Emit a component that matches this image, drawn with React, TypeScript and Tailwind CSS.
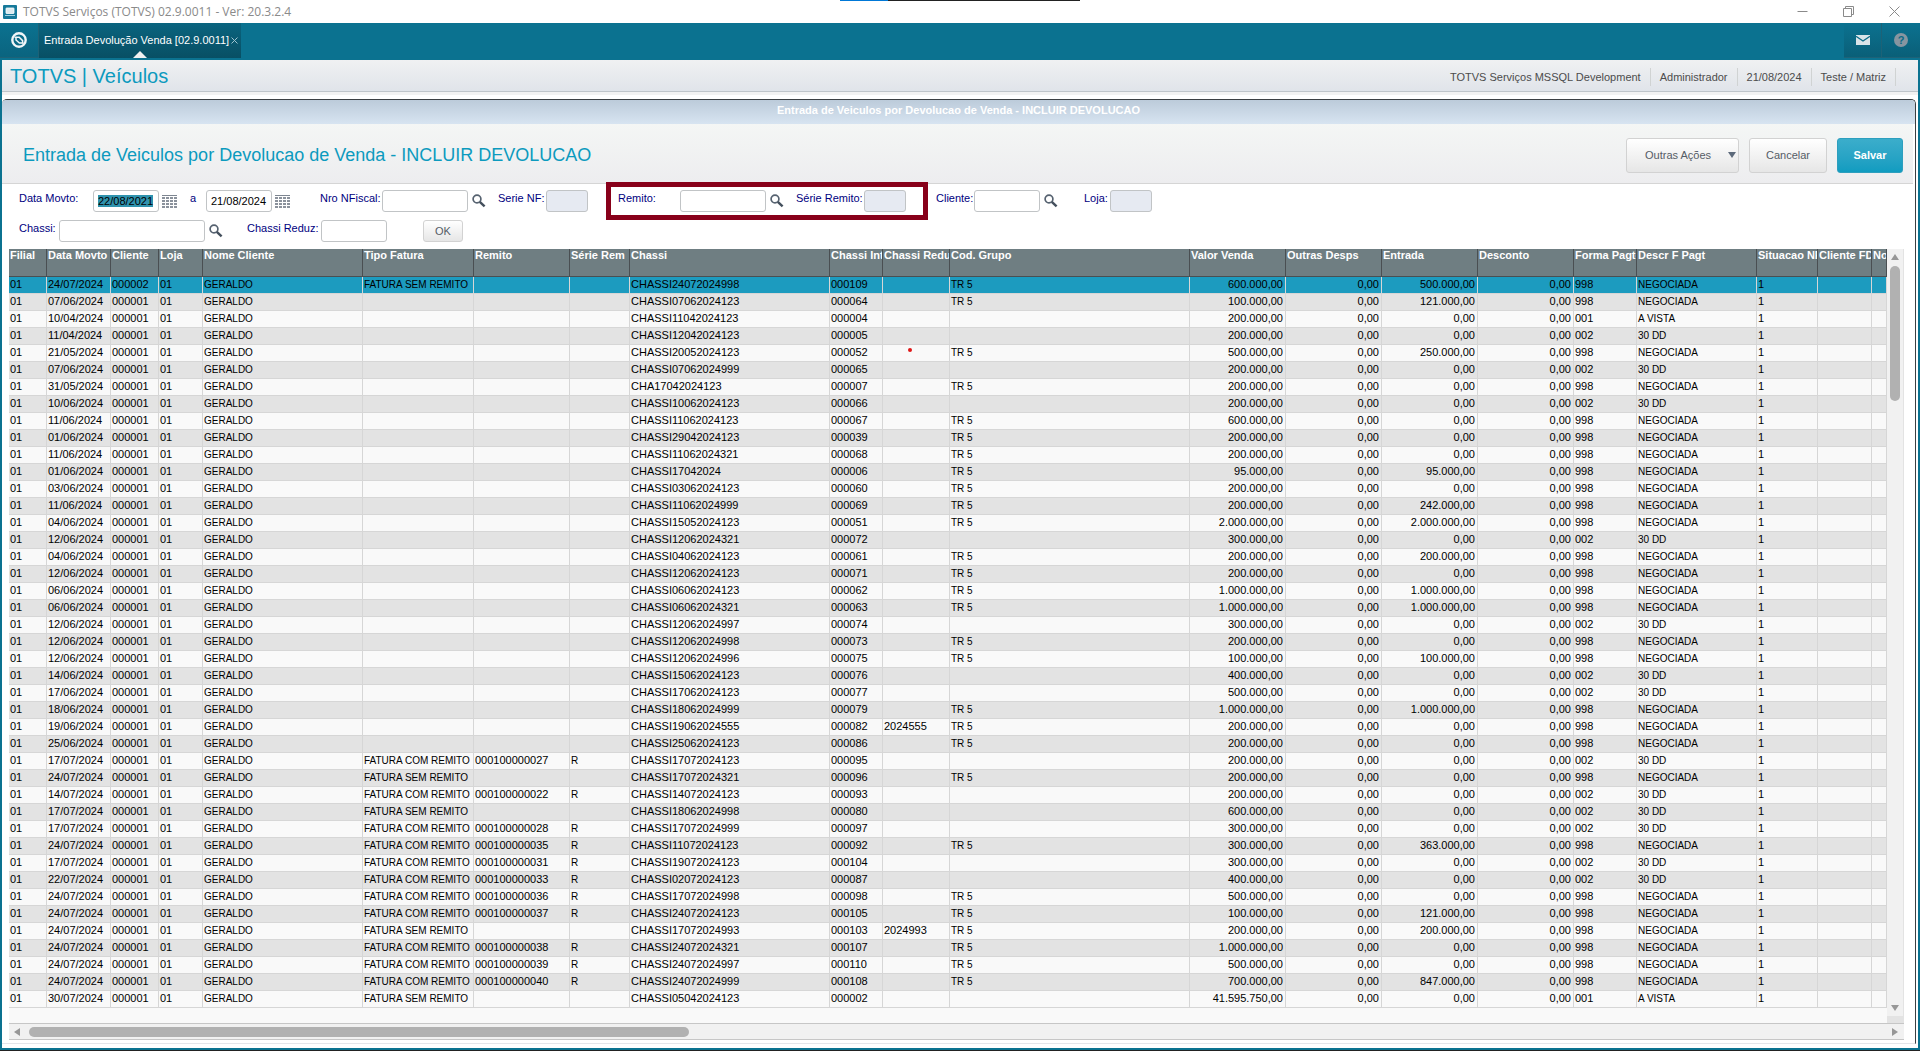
import type { ReactNode } from "react";

type Column = { title: string; width: number; small?: boolean; right?: boolean };

const columns: Column[] = [
  { title: "Filial", width: 38 },
  { title: "Data Movto", width: 64 },
  { title: "Cliente", width: 48 },
  { title: "Loja", width: 44 },
  { title: "Nome Cliente", width: 160, small: true },
  { title: "Tipo Fatura", width: 111, small: true },
  { title: "Remito", width: 96 },
  { title: "Série Rem", width: 60, small: true },
  { title: "Chassi", width: 200 },
  { title: "Chassi Int", width: 53 },
  { title: "Chassi Reduz", width: 67 },
  { title: "Cod. Grupo", width: 240, small: true },
  { title: "Valor Venda", width: 96, right: true },
  { title: "Outras Desps", width: 96, right: true },
  { title: "Entrada", width: 96, right: true },
  { title: "Desconto", width: 96, right: true },
  { title: "Forma Pagto", width: 63 },
  { title: "Descr F Pagt", width: 120, small: true },
  { title: "Situacao NF", width: 61 },
  { title: "Cliente FDI", width: 54 },
  { title: "No", width: 15 },
];

// data | remito | chassi | interno | reduzido | grupo | valor | entrada | pagto
// remito: "-" = none, "S" = fatura sem remito, number = fatura com remito
const source = `24/07/2024|S|CHASSI24072024998|000109||5|600.000,00|500.000,00|998
07/06/2024|-|CHASSI07062024123|000064||5|100.000,00|121.000,00|998
10/04/2024|-|CHASSI11042024123|000004|||200.000,00|0,00|001
11/04/2024|-|CHASSI12042024123|000005|||200.000,00|0,00|002
21/05/2024|-|CHASSI20052024123|000052||5|500.000,00|250.000,00|998
07/06/2024|-|CHASSI07062024999|000065|||200.000,00|0,00|002
31/05/2024|-|CHA17042024123|000007||5|200.000,00|0,00|998
10/06/2024|-|CHASSI10062024123|000066|||200.000,00|0,00|002
11/06/2024|-|CHASSI11062024123|000067||5|600.000,00|0,00|998
01/06/2024|-|CHASSI29042024123|000039||5|200.000,00|0,00|998
11/06/2024|-|CHASSI11062024321|000068||5|200.000,00|0,00|998
01/06/2024|-|CHASSI17042024|000006||5|95.000,00|95.000,00|998
03/06/2024|-|CHASSI03062024123|000060||5|200.000,00|0,00|998
11/06/2024|-|CHASSI11062024999|000069||5|200.000,00|242.000,00|998
04/06/2024|-|CHASSI15052024123|000051||5|2.000.000,00|2.000.000,00|998
12/06/2024|-|CHASSI12062024321|000072|||300.000,00|0,00|002
04/06/2024|-|CHASSI04062024123|000061||5|200.000,00|200.000,00|998
12/06/2024|-|CHASSI12062024123|000071||5|200.000,00|0,00|998
06/06/2024|-|CHASSI06062024123|000062||5|1.000.000,00|1.000.000,00|998
06/06/2024|-|CHASSI06062024321|000063||5|1.000.000,00|1.000.000,00|998
12/06/2024|-|CHASSI12062024997|000074|||300.000,00|0,00|002
12/06/2024|-|CHASSI12062024998|000073||5|200.000,00|0,00|998
12/06/2024|-|CHASSI12062024996|000075||5|100.000,00|100.000,00|998
14/06/2024|-|CHASSI15062024123|000076|||400.000,00|0,00|002
17/06/2024|-|CHASSI17062024123|000077|||500.000,00|0,00|002
18/06/2024|-|CHASSI18062024999|000079||5|1.000.000,00|1.000.000,00|998
19/06/2024|-|CHASSI19062024555|000082|2024555|5|200.000,00|0,00|998
25/06/2024|-|CHASSI25062024123|000086||5|200.000,00|0,00|998
17/07/2024|27|CHASSI17072024123|000095|||200.000,00|0,00|002
24/07/2024|S|CHASSI17072024321|000096||5|200.000,00|0,00|998
14/07/2024|22|CHASSI14072024123|000093|||200.000,00|0,00|002
17/07/2024|S|CHASSI18062024998|000080|||600.000,00|0,00|002
17/07/2024|28|CHASSI17072024999|000097|||300.000,00|0,00|002
24/07/2024|35|CHASSI11072024123|000092||5|300.000,00|363.000,00|998
17/07/2024|31|CHASSI19072024123|000104|||300.000,00|0,00|002
22/07/2024|33|CHASSI02072024123|000087|||400.000,00|0,00|002
24/07/2024|36|CHASSI17072024998|000098||5|500.000,00|0,00|998
24/07/2024|37|CHASSI24072024123|000105||5|100.000,00|121.000,00|998
24/07/2024|S|CHASSI17072024993|000103|2024993|5|200.000,00|200.000,00|998
24/07/2024|38|CHASSI24072024321|000107||5|1.000.000,00|0,00|998
24/07/2024|39|CHASSI24072024997|000110||5|500.000,00|0,00|998
24/07/2024|40|CHASSI24072024999|000108||5|700.000,00|847.000,00|998
30/07/2024|S|CHASSI05042024123|000002|||41.595.750,00|0,00|001`;

const payments: Record<string, string> = { "998": "NEGOCIADA", "001": "A VISTA", "002": "30 DD" };

const rows = source.split("\n").map((line, i) => {
  const [date, rem, chassi, interno, reduz, grupo, valor, entrada, pagto] = line.split("|");
  const hasRemito = rem !== "-" && rem !== "S";
  const tipo = rem === "-" ? "" : hasRemito ? "FATURA COM REMITO" : "FATURA SEM REMITO";
  return [
    "01", date, i === 0 ? "000002" : "000001", "01", "GERALDO", tipo,
    hasRemito ? "0001000000" + rem : "", hasRemito ? "R" : "", chassi, interno, reduz,
    grupo ? "TR 5" : "", valor, "0,00", entrada, "0,00", pagto, payments[pagto], "1", "", "",
  ];
});

const SearchButton = ({ label }: { label: string }) => (
  <button aria-label={label} className="ml-1 mt-1 h-4 w-4 shrink-0">
    <svg viewBox="0 0 16 16" className="h-4 w-4" fill="none">
      <circle cx="5" cy="5" r="3.9" stroke="#566270" strokeWidth="1.7" />
      <path d="M7.8 7.8L12.6 12.4" stroke="#434f5c" strokeWidth="2.4" />
    </svg>
  </button>
);

const CalendarButton = ({ label }: { label: string }) => (
  <button aria-label={label} className="ml-[3px] mt-[5px] h-[14px] w-4 shrink-0">
    <svg viewBox="0 0 16 14" className="h-[14px] w-4" shapeRendering="crispEdges">
      <path d="M0 0H15V1H0z" fill="#7d8590" />
      {[2, 5, 8, 11].map((y) =>
        [0, 4, 8, 12].map((x) => <rect key={x + "-" + y} x={x} y={y} width="3" height="2" fill="#8b929c" />)
      )}
    </svg>
  </button>
);

type FieldProps = {
  id: string;
  label: string;
  labelClass: string;
  inputClass: string;
  value?: string;
  disabled?: boolean;
  selected?: boolean;
};

const Field = ({ id, label, labelClass, inputClass, value = "", disabled, selected }: FieldProps) => (
  <>
    <label htmlFor={id} className={"shrink-0 whitespace-nowrap leading-4 text-[#000080] " + labelClass}>
      {label}
    </label>
    <input
      id={id}
      defaultValue={value}
      disabled={disabled}
      autoFocus={selected}
      onFocus={(e) => e.target.select()}
      ref={(el) => {
        if (el && selected) el.select();
      }}
      className={
        "h-[22px] shrink-0 rounded-[3px] border border-[#c1c4c6] px-1 text-[11px] text-black outline-none selection:bg-[#2f93ae] selection:text-black disabled:bg-[#e6eaf2] " +
        inputClass
      }
    />
  </>
);

const Arrow = ({ d }: { d: string }) => (
  <svg viewBox="0 0 8 8" className="h-2 w-2" fill="#979797">
    <path d={d} />
  </svg>
);

const InfoItem = ({ children }: { children: ReactNode }) => (
  <span className="border-r border-[#d0d3d3] px-[9px] leading-[18px]">{children}</span>
);

const actionButton =
  "h-[35px] rounded-[3px] border border-[#d2d2d2] bg-linear-to-b from-white to-[#e6e6e6] text-[#555c66]";

const TitleBar = () => (
  <header className="relative flex h-[23px] items-center justify-between bg-white pl-[3px] pr-5">
    <div className="absolute inset-x-0 top-0 flex justify-center">
      <span className="h-px w-12 bg-[#0078d7]" />
      <span className="h-px w-48 bg-[#222]" />
    </div>
    <div className="flex items-center gap-[6px] font-['Open_Sans',sans-serif] text-[12px] text-[#8a8a8a]">
      <svg viewBox="0 0 14 14" className="h-[14px] w-[14px]">
        <rect width="14" height="14" rx="1" fill="#15799a" />
        <rect x="3" y="3" width="8" height="5.5" rx="0.5" fill="#dcebf0" stroke="#fff" strokeWidth="0.8" />
        <path d="M2 10.5H12" stroke="#9fd0df" />
      </svg>
      <span>TOTVS Serviços (TOTVS) 02.9.0011 - Ver: 20.3.2.4</span>
    </div>
    <div className="flex items-center gap-[35px]">
      <button aria-label="Minimizar">
        <svg viewBox="0 0 11 11" className="h-[11px] w-[11px]" stroke="#8a8a8a">
          <path d="M0.5 5.5H10.5" />
        </svg>
      </button>
      <button aria-label="Restaurar">
        <svg viewBox="0 0 11 11" className="h-[11px] w-[11px]" fill="none" stroke="#8a8a8a">
          <path d="M0.5 2.5H8.5V10.5H0.5zM2.5 2.5V0.5H10.5V8.5H8.5" />
        </svg>
      </button>
      <button aria-label="Fechar">
        <svg viewBox="0 0 11 11" className="h-[11px] w-[11px]" stroke="#8a8a8a">
          <path d="M0.5 0.5L10.5 10.5M10.5 0.5L0.5 10.5" />
        </svg>
      </button>
    </div>
  </header>
);

const TabBar = () => (
  <nav className="flex h-[37px] items-start justify-between bg-[#0b7290]">
    <div className="flex">
      <button
        aria-label="Início"
        className="flex h-[35px] w-[39px] items-center justify-center border-b border-r border-[#1d6277] bg-linear-to-b from-[#0b7290] to-[#0a647f]"
      >
        <svg viewBox="0 0 18 18" className="h-[18px] w-[18px]" fill="none" stroke="#f1f6f8">
          <circle cx="9" cy="9" r="6.7" strokeWidth="2.4" />
          <path d="M4.5 6.2H9.2L12.6 9.6V12.6" strokeWidth="1.5" />
          <path d="M6 6.2V9L9.4 12H13.4" strokeWidth="1.5" />
        </svg>
      </button>
      <div className="relative flex h-[35px] items-center gap-[2px] bg-linear-to-b from-[#0a647f] to-[#084f64] pl-[5px] pr-[3px] text-white">
        <button className="whitespace-nowrap">Entrada Devolução Venda [02.9.0011]</button>
        <button aria-label="Fechar aba">
          <svg viewBox="0 0 7 7" className="h-[7px] w-[7px]" stroke="#9fc3cf">
            <path d="M0.5 0.5L6.5 6.5M6.5 0.5L0.5 6.5" />
          </svg>
        </button>
        <svg viewBox="0 0 14 7" className="absolute bottom-0 left-1/2 h-[7px] w-[14px] -translate-x-1/2" fill="#f0f1f2">
          <path d="M7 0L14 7H0z" />
        </svg>
      </div>
    </div>
    <div className="flex">
      <button
        aria-label="Mensagens"
        className="flex h-[35px] w-[38px] items-center justify-center border-b border-r border-[#1d6277] bg-linear-to-b from-[#0b7290] to-[#0a5f78]"
      >
        <svg viewBox="0 0 14 10" className="h-[10px] w-[14px]">
          <rect width="14" height="10" fill="#d9e3e8" />
          <path d="M0 1.2L7 6L14 1.2" fill="none" stroke="#0a6a86" strokeWidth="1.3" />
        </svg>
      </button>
      <button
        aria-label="Ajuda"
        className="flex h-[35px] w-[38px] items-center justify-center border-b border-[#1d6277] bg-linear-to-b from-[#0b7290] to-[#0a5f78]"
      >
        <span className="flex h-[14px] w-[14px] items-center justify-center rounded-full bg-[#8795a0] text-[11px] font-bold text-[#0a6a86]">
          ?
        </span>
      </button>
    </div>
  </nav>
);

const Filters = () => (
  <form className="pl-[17px] pt-[6px]" onSubmit={(e) => e.preventDefault()}>
    <div className="flex items-start">
      <Field
        id="dataDe"
        label="Data Movto:"
        labelClass="w-[74px]"
        inputClass="w-[66px]"
        value="22/08/2021"
        selected
      />
      <CalendarButton label="Calendário inicial" />
      <Field id="dataAte" label="a" labelClass="ml-3 w-[16px]" inputClass="w-[66px]" value="21/08/2024" />
      <CalendarButton label="Calendário final" />
      <Field id="nfiscal" label="Nro NFiscal:" labelClass="ml-[29px] w-[62px]" inputClass="w-[86px]" />
      <SearchButton label="Pesquisar nota fiscal" />
      <Field id="serieNf" label="Serie NF:" labelClass="ml-[10px] w-12" inputClass="w-[42px]" disabled />
      <fieldset className="-my-2 ml-[18px] flex items-start border-[5px] border-[#88001a] px-[7px] py-[3px]">
        <Field id="remito" label="Remito:" labelClass="w-[62px]" inputClass="w-[86px]" />
        <SearchButton label="Pesquisar remito" />
        <Field
          id="serieRemito"
          label="Série Remito:"
          labelClass="ml-[10px] w-[68px]"
          inputClass="mr-[10px] w-[42px]"
          disabled
        />
      </fieldset>
      <Field id="cliente" label="Cliente:" labelClass="ml-2 w-[38px]" inputClass="w-[66px]" />
      <SearchButton label="Pesquisar cliente" />
      <Field id="loja" label="Loja:" labelClass="ml-6 w-[26px]" inputClass="w-[42px]" disabled />
    </div>
    <div className="mt-2 flex items-start">
      <Field id="chassi" label="Chassi:" labelClass="w-[40px]" inputClass="w-[146px]" />
      <SearchButton label="Pesquisar chassi" />
      <Field id="chassiReduz" label="Chassi Reduz:" labelClass="ml-[22px] w-[74px]" inputClass="w-[66px]" />
      <button className="ml-9 h-[22px] w-10 rounded-[3px] border border-[#d2d2d2] bg-linear-to-b from-white to-[#e6e6e6] text-[#555c66]">
        OK
      </button>
    </div>
  </form>
);

const Grid = () => (
  <div className="mt-[7px] pl-[7px] pr-[11px]">
    <div className="flex">
      <div className="min-w-0 flex-1 overflow-hidden bg-[#f9f9f9] pb-[15px]">
        <table className="w-full table-fixed border-separate border-spacing-0">
          <colgroup>
            {columns.map((c) => (
              <col key={c.title} style={{ width: c.width }} />
            ))}
          </colgroup>
          <thead>
            <tr className="h-7 bg-[#6f7e82] text-left align-top text-white">
              {columns.map((c) => (
                <th
                  key={c.title}
                  className="overflow-hidden whitespace-nowrap border-b border-r border-[#4a4f52] p-0 pl-px leading-[13px]"
                >
                  {c.title}
                </th>
              ))}
            </tr>
          </thead>
          <tbody>
            {rows.map((row, r) => (
              <tr
                key={r}
                className={"h-[17px] " + (r === 0 ? "bg-[#1c9bbf]" : r % 2 ? "bg-[#e3e3e3]" : "bg-[#f9f9f9]")}
              >
                {row.map((cell, c) => (
                  <td
                    key={c}
                    className={
                      "relative overflow-hidden whitespace-nowrap border-b border-r border-[#d6d6d6] p-0 pb-px pl-px leading-[15px] text-black" +
                      (columns[c].small ? " text-[10px]" : "") +
                      (columns[c].right ? " pr-[2px] text-right" : "")
                    }
                  >
                    {cell}
                    {r === 4 && c === 10 && (
                      <span className="absolute left-[25px] top-[3px] h-1 w-1 rounded-full bg-[#e01818]" />
                    )}
                  </td>
                ))}
              </tr>
            ))}
          </tbody>
        </table>
      </div>
      <div className="flex w-[17px] flex-col items-center border-r border-[#e3e3e3] bg-[#f1f1f1] pt-1">
        <Arrow d="M4 1L8 7H0z" />
        <div className="mt-[5px] h-[135px] w-[10px] rounded-[5px] bg-[#b1b1b1]" />
        <div className="mt-auto pb-[4px]">
          <Arrow d="M4 7L0 1H8z" />
        </div>
        <div className="h-[7px] w-full bg-[#e3e3e3]" />
      </div>
    </div>
    <div className="flex h-[17px] items-center border-y border-[#c6c6c6] bg-[#f1f1f1] pl-1 pr-[5px]">
      <Arrow d="M1 4L7 0V8z" />
      <div className="ml-2 h-[10px] w-[35%] rounded-[5px] bg-[#b1b1b1]" />
      <div className="ml-auto">
        <Arrow d="M7 4L1 0V8z" />
      </div>
    </div>
  </div>
);

export default function App() {
  return (
    <div className="flex min-h-screen flex-col border-b border-[#222] bg-white font-['Liberation_Sans',Arial,sans-serif] text-[11px]">
      <TitleBar />
      <TabBar />
      <div className="flex flex-1 flex-col border-x-2 border-b-2 border-[#0b7290]">
        <div className="flex h-8 items-center justify-between border-b border-[#bfc5ca] bg-linear-to-b from-[#f0f1f2] to-[#e0e4ea] pl-2 pr-[22px]">
          <h1 className="text-[20px] text-[#0c9abe]">TOTVS | Veículos</h1>
          <div className="mt-[2px] flex text-[#4c4c4c]">
            <InfoItem>TOTVS Serviços MSSQL Development</InfoItem>
            <InfoItem>Administrador</InfoItem>
            <InfoItem>21/08/2024</InfoItem>
            <InfoItem>Teste / Matriz</InfoItem>
          </div>
        </div>
        <div className="h-[3px] bg-[#f2f2f2]" />
        <main className="mb-1 mr-[2px] mt-1 flex-1 rounded-t-[5px] border-b border-r border-t border-[#3b3f42] border-b-[#e4e5ea]">
          <div className="rounded-t-[4px] bg-linear-to-b from-[#bccbda] to-[#d7e4f1] pb-1 text-center text-[11px] font-bold leading-5 text-white">
            Entrada de Veiculos por Devolucao de Venda - INCLUIR DEVOLUCAO
          </div>
          <div className="mr-[2px] flex h-[60px] items-center justify-between border-b border-[#d5d5d5] bg-linear-to-b from-[#f4f6f5] to-[#ededef] pl-[21px] pr-[10px] pt-[3px]">
            <h2 className="text-[18px] text-[#0c9abe]">
              Entrada de Veiculos por Devolucao de Venda - INCLUIR DEVOLUCAO
            </h2>
            <div className="flex gap-[10px]">
              <button className={actionButton + " flex w-[113px] items-center pl-[18px] pr-[2px]"}>
                Outras Ações
                <svg viewBox="0 0 8 6" className="ml-auto h-[6px] w-2" fill="#5d6a7b">
                  <path d="M0 0H8L4 6z" />
                </svg>
              </button>
              <button className={actionButton + " w-[78px]"}>Cancelar</button>
              <button className="h-[35px] w-[66px] rounded-[3px] border border-[#2d9fbe] bg-linear-to-b from-[#3badcb] to-[#109cc0] font-bold text-white">
                Salvar
              </button>
            </div>
          </div>
          <Filters />
          <Grid />
        </main>
      </div>
    </div>
  );
}
